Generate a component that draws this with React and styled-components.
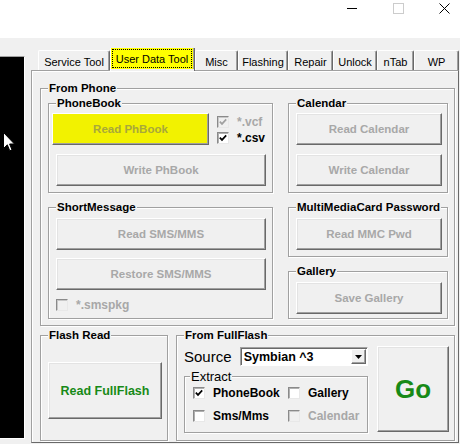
import React from 'react';
import styled, { createGlobalStyle } from 'styled-components';

const Global = createGlobalStyle`
  html, body { margin: 0; padding: 0; }
  body {
    width: 460px; height: 444px; overflow: hidden; background: #f0f0f0;
    font-family: "Liberation Sans", Arial, sans-serif; color: #000;
  }
`;

const Window = styled.div`
  width: 460px; height: 444px; display: flex; flex-direction: column;
  overflow: hidden; background: #f0f0f0;
`;

const TitleBar = styled.div`
  height: 38px; flex-shrink: 0; background: #fff; box-sizing: border-box;
  display: flex; justify-content: flex-end; align-items: flex-start; padding-top: 3px;
`;
const Controls = styled.div`
  display: flex; margin-right: -7px;
`;
const Ctl = styled.div`
  width: 46px; height: 11px; display: flex; align-items: center; justify-content: center;
`;

const Body = styled.div`
  flex: 1; display: flex; min-height: 0;
`;
const Side = styled.div`
  width: 31px; flex-shrink: 0; overflow: hidden;
`;
const LogBox = styled.div`
  position: relative; box-sizing: border-box;
  margin-top: 18px; width: 25px; height: 383px;
  background: #000;
  border-top: 1px solid #a0a0a0; border-right: 1px solid #fff; border-bottom: 1px solid #fff;
`;
const Cursor = styled.svg`
  position: absolute; left: 3px; top: 75px;
`;

const TabControl = styled.div`
  display: flex; flex-direction: column;
`;
const TabStrip = styled.div`
  margin-top: 10px; height: 22px; display: flex; align-items: flex-end; padding-left: 7px;
`;
const Tab = styled.div`
  position: relative; z-index: 1; box-sizing: border-box;
  width: ${p => p.$w}px; height: 20px; flex-shrink: 0;
  display: flex; align-items: center; justify-content: center; padding-top: 2px;
  font-size: 11px; white-space: nowrap;
  border-top: 1px solid #fff; border-left: 1px solid #fff; border-right: 1px solid #696969;
  box-shadow: inset -1px 0 #a0a0a0;
  border-top-left-radius: 2px; border-top-right-radius: 2px;
`;
const ActiveTab = styled.div`
  position: relative; z-index: 1; box-sizing: border-box;
  width: ${p => p.$w}px; height: 23px; margin-bottom: -1px; flex-shrink: 0;
  display: flex; flex-direction: column;
  border-left: 1px solid #fff; border-right: 1px solid #696969;
  background: #f0f0f0; padding-bottom: 2px;
`;
const ActiveFill = styled.div`
  flex: 1; background: #ffff00; border-right: 1px solid #a0a0a0;
  display: flex; align-items: center; justify-content: center;
`;
const FocusLabel = styled.span`
  box-sizing: border-box; height: 19px; width: 80px;
  display: flex; align-items: center; justify-content: center;
  border: 1px dotted #000; font-size: 11px; white-space: nowrap;
`;

const TabPanel = styled.div`
  box-sizing: border-box; width: 428px; height: 373px;
  border-top: 1px solid #a0a0a0; border-left: 1px solid #a0a0a0;
  border-right: 1px solid #696969; border-bottom: 1px solid #696969;
  box-shadow: inset 1px 1px #fff;
  padding: 17px 0 0 8px;
  display: flex; flex-direction: column;
`;

const Group = styled.div`
  box-sizing: border-box; flex-shrink: 0;
  display: flex; flex-direction: column;
  width: ${p => p.$w}px; height: ${p => p.$h}px;
  margin-top: ${p => p.$mt ?? 0}px;
  border: 1px solid #a0a0a0;
  box-shadow: inset 1px 1px 0 #fff, 1px 1px 0 #fff;
  padding: 0 ${p => p.$pr ?? 6}px 0 ${p => p.$pl ?? 7}px;
`;
const Legend = styled.div`
  align-self: flex-start; margin-top: -8px; margin-left: ${p => p.$ml ?? 0}px;
  height: 15px; line-height: 15px; padding: 0 1px; background: #f0f0f0;
  font-size: ${p => p.$size ?? 11.5}px; font-weight: ${p => (p.$regular ? 400 : 700)};
  white-space: nowrap;
`;

const Columns = styled.div`
  display: flex; gap: 15px; margin-top: 7px;
`;
const Column = styled.div`
  display: flex; flex-direction: column;
`;
const Row = styled.div`
  display: flex; align-items: flex-start; margin-top: ${p => p.$mt ?? 0}px;
`;

const Btn = styled.div`
  box-sizing: border-box; flex-shrink: 0;
  display: flex; align-items: center; justify-content: center;
  width: ${p => (p.$w ? `${p.$w}px` : 'auto')};
  height: ${p => p.$h ?? 32}px;
  margin-top: ${p => p.$mt ?? 0}px; margin-left: ${p => p.$ml ?? 0}px;
  background: ${p => (p.$yellow ? '#f2f200' : '#f0f0f0')};
  border: 1px solid; border-color: #fff #696969 #696969 #fff;
  box-shadow: inset -1px -1px #a0a0a0, inset 1px 1px ${p => (p.$yellow ? '#f2f200' : '#e3e3e3')};
  font-weight: 700; font-size: ${p => p.$fs ?? 11.5}px; white-space: nowrap;
  color: ${p => p.$color ?? '#a8a8a8'};
`;

const Checks = styled.div`
  display: flex; flex-direction: column; gap: 4px; margin-left: 8px; padding-top: 3px;
`;
const CheckLine = styled.div`
  display: flex; align-items: center; gap: ${p => p.$gap ?? 8}px; height: 12px;
  margin-top: ${p => p.$mt ?? 0}px;
  font-size: ${p => p.$fs ?? 12}px; font-weight: 700;
  color: ${p => (p.$disabled ? '#a8a8a8' : '#000')};
  white-space: nowrap;
`;
const Box = styled.span`
  box-sizing: border-box; width: 12px; height: 12px; flex-shrink: 0;
  display: flex; align-items: center; justify-content: center;
  border: 1px solid; border-color: #8a8a8a #e8e8e8 #e8e8e8 #8a8a8a;
  box-shadow: inset 1px 1px ${p => (p.$disabled ? '#c8c8c8' : '#b0b0b0')};
  background: ${p => (p.$disabled ? '#f0f0f0' : '#fff')};
`;

const BottomRow = styled.div`
  display: flex; gap: 8px; margin-top: 9px;
`;
const FFRow = styled.div`
  display: flex; align-items: flex-start;
`;
const FFLeft = styled.div`
  width: 184px; display: flex; flex-direction: column;
`;
const SourceRow = styled.div`
  display: flex; align-items: center; height: 19px; margin-top: 4px;
`;
const SourceLabel = styled.span`
  width: 56px; font-size: 15px; line-height: 19px;
`;
const Select = styled.div`
  box-sizing: border-box; width: 129px; height: 19px;
  display: flex; align-items: center; justify-content: space-between;
  background: #fff;
  border: 1px solid; border-color: #a0a0a0 #fff #fff #a0a0a0;
  box-shadow: inset 1px 1px #696969;
  padding: 0 1px 0 3px;
  font-size: 12.5px; font-weight: 700;
`;
const DropBtn = styled.span`
  box-sizing: border-box; width: 15px; height: 15px;
  display: flex; align-items: center; justify-content: center;
  background: #f0f0f0; border: 1px solid; border-color: #fff #696969 #696969 #fff;
  box-shadow: inset -1px -1px #a0a0a0;
`;
const ExtractGrid = styled.div`
  display: grid; grid-template-columns: 95px 80px; row-gap: 11px; margin-top: 3px;
`;

const Check = ({ checked, disabled }) => (
  <Box $disabled={disabled}>
    {checked && (
      <svg width="8" height="8" viewBox="0 0 8 8">
        <path d="M0.8 3.6 L3 5.9 L7.2 1.4" fill="none" stroke={disabled ? '#a0a0a0' : '#000'} strokeWidth="1.7" />
      </svg>
    )}
  </Box>
);

const tabs = [
  { label: 'Service Tool', w: 72 },
  { label: 'User Data Tool', w: 85, active: true },
  { label: 'Misc', w: 43 },
  { label: 'Flashing', w: 50 },
  { label: 'Repair', w: 45 },
  { label: 'Unlock', w: 44 },
  { label: 'nTab', w: 37 },
  { label: 'WP', w: 45 },
];

const GREEN = '#178a17';

export default function App() {
  return (
    <Window>
      <Global />
      <TitleBar>
        <Controls>
          <Ctl>
            <svg width="11" height="11" viewBox="0 0 11 11"><path d="M0 5.5 H10" stroke="#000" strokeWidth="1" /></svg>
          </Ctl>
          <Ctl>
            <svg width="11" height="11" viewBox="0 0 11 11"><rect x="0.5" y="0.5" width="10" height="10" fill="none" stroke="#cccccc" /></svg>
          </Ctl>
          <Ctl>
            <svg width="11" height="11" viewBox="0 0 11 11"><path d="M0.5 0.5 L10.5 10.5 M10.5 0.5 L0.5 10.5" stroke="#000" strokeWidth="1" /></svg>
          </Ctl>
        </Controls>
      </TitleBar>
      <Body>
        <Side>
          <LogBox>
            <Cursor width="12" height="21" viewBox="0 0 12 21">
              <path d="M0.5 0.5 V16.5 L4.3 12.8 L6.8 18.8 L9 17.8 L6.6 12 H11.5 Z" fill="#fff" stroke="#000" />
            </Cursor>
          </LogBox>
        </Side>
        <TabControl>
          <TabStrip>
            {tabs.map(t =>
              t.active ? (
                <ActiveTab key={t.label} $w={t.w}>
                  <ActiveFill>
                    <FocusLabel>{t.label}</FocusLabel>
                  </ActiveFill>
                </ActiveTab>
              ) : (
                <Tab key={t.label} $w={t.w}>{t.label}</Tab>
              )
            )}
          </TabStrip>
          <TabPanel>
            <Group $w={415} $h={238}>
              <Legend>From Phone</Legend>
              <Columns>
                <Column>
                  <Group $w={225} $h={90}>
                    <Legend>PhoneBook</Legend>
                    <Row $mt={2}>
                      <Btn $yellow $w={157} $ml={-4} $color="#a8a83a">Read PhBook</Btn>
                      <Checks>
                        <CheckLine $disabled><Check checked disabled />*.vcf</CheckLine>
                        <CheckLine><Check checked />*.csv</CheckLine>
                      </Checks>
                    </Row>
                    <Btn $mt={9}>Write PhBook</Btn>
                  </Group>
                  <Group $w={225} $h={112} $mt={14}>
                    <Legend>ShortMessage</Legend>
                    <Btn $mt={3}>Read SMS/MMS</Btn>
                    <Btn $mt={8}>Restore SMS/MMS</Btn>
                    <CheckLine $disabled $mt={9}><Check disabled />*.smspkg</CheckLine>
                  </Group>
                </Column>
                <Column>
                  <Group $w={160} $h={90} $pr={5}>
                    <Legend>Calendar</Legend>
                    <Btn $mt={2}>Read Calendar</Btn>
                    <Btn $mt={9}>Write Calendar</Btn>
                  </Group>
                  <Group $w={160} $h={50} $pr={5} $mt={14}>
                    <Legend>MultiMediaCard Password</Legend>
                    <Btn $mt={3}>Read MMC Pwd</Btn>
                  </Group>
                  <Group $w={160} $h={48} $pr={5} $mt={14}>
                    <Legend>Gallery</Legend>
                    <Btn $mt={3}>Save Gallery</Btn>
                  </Group>
                </Column>
              </Columns>
            </Group>
            <BottomRow>
              <Group $w={128} $h={106}>
                <Legend>Flash Read</Legend>
                <Btn $mt={19} $w={114} $h={57} $fs={12.5} $color={GREEN}>Read FullFlash</Btn>
              </Group>
              <Group $w={279} $h={106}>
                <Legend>From FullFlash</Legend>
                <FFRow>
                  <FFLeft>
                    <SourceRow>
                      <SourceLabel>Source</SourceLabel>
                      <Select>
                        Symbian ^3
                        <DropBtn>
                          <svg width="7" height="4" viewBox="0 0 7 4"><path d="M0 0 H7 L3.5 4 Z" fill="#000" /></svg>
                        </DropBtn>
                      </Select>
                    </SourceRow>
                    <Group $w={184} $h={57} $mt={10} $pl={8}>
                      <Legend $regular $size={13} $ml={-3}>Extract</Legend>
                      <ExtractGrid>
                        <CheckLine $fs={12}><Check checked />PhoneBook</CheckLine>
                        <CheckLine $fs={12}><Check />Gallery</CheckLine>
                        <CheckLine $fs={12}><Check />Sms/Mms</CheckLine>
                        <CheckLine $fs={12} $disabled><Check disabled />Calendar</CheckLine>
                      </ExtractGrid>
                    </Group>
                  </FFLeft>
                  <Btn $mt={3} $ml={9} $w={72} $h={86} $fs={26} $color={GREEN}>Go</Btn>
                </FFRow>
              </Group>
            </BottomRow>
          </TabPanel>
        </TabControl>
      </Body>
    </Window>
  );
}
